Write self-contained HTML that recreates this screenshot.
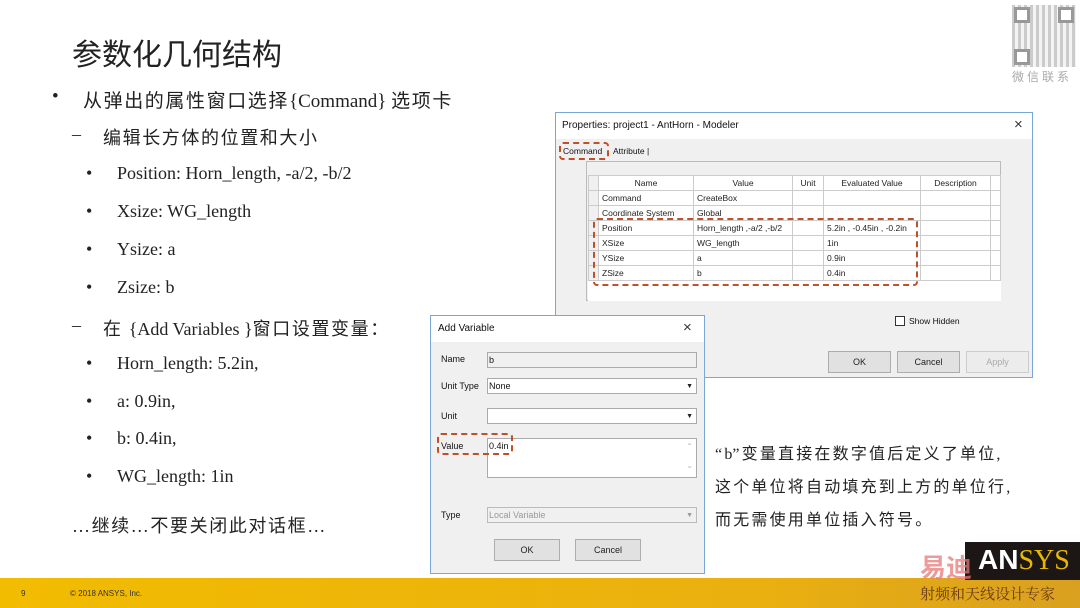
<!DOCTYPE html>
<html><head><meta charset="utf-8"><style>
*{margin:0;padding:0;box-sizing:border-box}
body{width:1080px;height:608px;overflow:hidden;background:#fff;position:relative;font-family:"Liberation Serif","Noto Sans CJK SC",sans-serif;color:#222}
.a{position:absolute;white-space:nowrap}
.cn{letter-spacing:1.6px}
.l{letter-spacing:0}
.ui{font-family:"Liberation Sans",sans-serif;font-size:9px;color:#111}
.dash{position:absolute;border:2px dashed #c0502a;border-radius:4px}
table{border-collapse:collapse}
td{border:1px solid #ccc;height:15px;padding:0 3px;font-family:"Liberation Sans",sans-serif;font-size:8.5px;background:#fff}
.box{position:absolute;background:#fff;border:1px solid #aaa}
.btn{position:absolute;border:1px solid #adadad;background:#e1e1e1;text-align:center;font-family:"Liberation Sans",sans-serif;font-size:9px;line-height:20px}
</style></head><body>
<div class="a" style="left:72px;top:30px;font-size:30px;font-family:'Liberation Sans','Noto Sans CJK SC',sans-serif;color:#222">参数化几何结构</div>
<div class="a" style="left:52px;top:86px;font-size:19px">•</div>
<div class="a cn" style="left:83px;top:86px;font-size:19px">从弹出的属性窗口选择<span class="l">{Command} </span>选项卡</div>
<div class="a" style="left:72px;top:124px;font-size:18px">–</div>
<div class="a cn" style="left:103px;top:124px;font-size:18px">编辑长方体的位置和大小</div>
<div class="a" style="left:86px;top:163px;font-size:18px">•</div><div class="a" style="left:117px;top:163px;font-size:18px">Position: Horn_length, -a/2, -b/2</div>
<div class="a" style="left:86px;top:201px;font-size:18px">•</div><div class="a" style="left:117px;top:201px;font-size:18px">Xsize: WG_length</div>
<div class="a" style="left:86px;top:239px;font-size:18px">•</div><div class="a" style="left:117px;top:239px;font-size:18px">Ysize: a</div>
<div class="a" style="left:86px;top:277px;font-size:18px">•</div><div class="a" style="left:117px;top:277px;font-size:18px">Zsize: b</div>
<div class="a" style="left:72px;top:315px;font-size:18px">–</div><div class="a cn" style="left:103px;top:315px;font-size:18px">在 <span class="l">{Add Variables }</span>窗口设置变量：</div>
<div class="a" style="left:86px;top:353px;font-size:18px">•</div><div class="a" style="left:117px;top:353px;font-size:18px">Horn_length: 5.2in,</div>
<div class="a" style="left:86px;top:391px;font-size:18px">•</div><div class="a" style="left:117px;top:391px;font-size:18px">a: 0.9in,</div>
<div class="a" style="left:86px;top:428px;font-size:18px">•</div><div class="a" style="left:117px;top:428px;font-size:18px">b: 0.4in,</div>
<div class="a" style="left:86px;top:466px;font-size:18px">•</div><div class="a" style="left:117px;top:466px;font-size:18px">WG_length: 1in</div>
<div class="a cn" style="left:72px;top:512px;font-size:18px">…继续…不要关闭此对话框…</div>

<div class="a" style="left:715px;top:440px;font-size:16px;letter-spacing:2.2px">“<span class="l">b</span>”变量直接在数字值后定义了单位,</div>
<div class="a" style="left:715px;top:473px;font-size:16px;letter-spacing:2.2px">这个单位将自动填充到上方的单位行,</div>
<div class="a" style="left:715px;top:506px;font-size:16px;letter-spacing:2.2px">而无需使用单位插入符号。</div>

<!-- Properties dialog -->
<div class="a" style="left:555px;top:112px;width:478px;height:266px;background:#f0f0f0;border:1px solid #7aa7d6">
 <div style="height:26px;background:#fff"></div>
 <div class="a ui" style="left:6px;top:7px;font-size:10px">Properties: project1 - AntHorn - Modeler</div>
 <div class="a" style="left:458px;top:3px;font-size:15px;font-family:'Liberation Sans';color:#333">×</div>
 <div class="a ui" style="left:7px;top:33px;font-size:8.5px">Command</div>
 <div class="a ui" style="left:57px;top:33px;font-size:8.5px">Attribute |</div>
 <div class="a" style="left:30px;top:48px;width:415px;height:140px;border:1px solid #bbb;background:#f0f0f0"></div>
 <div class="a" style="left:32px;top:62px;width:413px;height:126px;background:#fff"></div>
 <table class="a" style="left:32px;top:62px">
  <tr><td style="width:10px;background:#f0f0f0"></td><td style="width:95px;text-align:center">Name</td><td style="width:99px;text-align:center">Value</td><td style="width:31px;text-align:center">Unit</td><td style="width:97px;text-align:center">Evaluated Value</td><td style="width:70px;text-align:center">Description</td><td style="width:10px"></td></tr>
  <tr><td style="background:#f0f0f0"></td><td>Command</td><td>CreateBox</td><td></td><td></td><td></td><td></td></tr>
  <tr><td style="background:#f0f0f0"></td><td>Coordinate System</td><td>Global</td><td></td><td></td><td></td><td></td></tr>
  <tr><td style="background:#f0f0f0"></td><td>Position</td><td>Horn_length ,-a/2 ,-b/2</td><td></td><td>5.2in , -0.45in , -0.2in</td><td></td><td></td></tr>
  <tr><td style="background:#f0f0f0"></td><td>XSize</td><td>WG_length</td><td></td><td>1in</td><td></td><td></td></tr>
  <tr><td style="background:#f0f0f0"></td><td>YSize</td><td>a</td><td></td><td>0.9in</td><td></td><td></td></tr>
  <tr><td style="background:#f0f0f0"></td><td>ZSize</td><td>b</td><td></td><td>0.4in</td><td></td><td></td></tr>
 </table>
 <div class="a" style="left:339px;top:203px;width:10px;height:10px;border:1px solid #333;background:#fff"></div>
 <div class="a ui" style="left:353px;top:203px;font-size:8.5px">Show Hidden</div>
 <div class="btn" style="left:272px;top:238px;width:63px">OK</div>
 <div class="btn" style="left:341px;top:238px;width:63px">Cancel</div>
 <div class="btn" style="left:410px;top:238px;width:63px;color:#aaa;background:#ececec;border-color:#ccc">Apply</div>
</div>
<div class="dash" style="left:559px;top:142px;width:50px;height:18px"></div>
<div class="dash" style="left:593px;top:218px;width:325px;height:68px"></div>

<!-- Add Variable dialog -->
<div class="a" style="left:430px;top:315px;width:275px;height:259px;background:#f0f0f0;border:1px solid #7aa7d6">
 <div style="height:26px;background:#fff"></div>
 <div class="a ui" style="left:7px;top:7px;font-size:10px">Add Variable</div>
 <div class="a" style="left:252px;top:3px;font-size:15px;font-family:'Liberation Sans';color:#333">×</div>
 <div class="a ui" style="left:10px;top:38px">Name</div>
 <div class="a" style="left:56px;top:36px;width:210px;height:16px;border:1px solid #aaa;background:#f0f0f0"><span class="ui" style="position:absolute;left:1px;top:2px">b</span></div>
 <div class="a ui" style="left:10px;top:65px">Unit Type</div>
 <div class="box" style="left:56px;top:62px;width:210px;height:16px"><span class="ui" style="position:absolute;left:1px;top:2px">None</span><span style="position:absolute;right:3px;top:3px;font-size:7px">▼</span></div>
 <div class="a ui" style="left:10px;top:95px">Unit</div>
 <div class="box" style="left:56px;top:92px;width:210px;height:16px"><span style="position:absolute;right:3px;top:3px;font-size:7px">▼</span></div>
 <div class="a ui" style="left:10px;top:125px">Value</div>
 <div class="box" style="left:56px;top:122px;width:210px;height:40px"><span class="ui" style="position:absolute;left:1px;top:2px">0.4in</span><span style="position:absolute;right:3px;top:3px;font-size:8px;color:#bbb">⌃</span><span style="position:absolute;right:3px;top:22px;font-size:8px;color:#bbb">⌄</span></div>
 <div class="a ui" style="left:10px;top:194px">Type</div>
 <div class="a" style="left:56px;top:191px;width:210px;height:16px;border:1px solid #bbb;background:#f0f0f0"><span class="ui" style="position:absolute;left:1px;top:2px;color:#999">Local Variable</span><span style="position:absolute;right:3px;top:3px;font-size:7px;color:#999">▼</span></div>
 <div class="btn" style="left:63px;top:223px;width:66px">OK</div>
 <div class="btn" style="left:144px;top:223px;width:66px">Cancel</div>
</div>
<div class="dash" style="left:437px;top:433px;width:76px;height:22px"></div>

<!-- QR -->
<div class="a" style="left:1012px;top:5px;width:64px;height:62px;background:repeating-linear-gradient(90deg,#aaa 0 3px,#eee 3px 6px),#ccc;opacity:.6"></div>
<div class="a" style="left:1014px;top:7px;width:16px;height:16px;border:3px solid #999;background:#fff"></div>
<div class="a" style="left:1058px;top:7px;width:16px;height:16px;border:3px solid #999;background:#fff"></div>
<div class="a" style="left:1014px;top:49px;width:16px;height:16px;border:3px solid #999;background:#fff"></div>
<div class="a" style="left:1012px;top:68px;font-size:12px;color:#aaa;font-family:'Noto Sans CJK SC',sans-serif;letter-spacing:3px">微信联系</div>

<!-- footer -->
<div class="a" style="left:0;top:578px;width:1080px;height:30px;background:linear-gradient(90deg,#f2bc00,#eab010 70%,#d9a020)"></div>
<div class="a" style="left:21px;top:589px;font-size:8px;font-family:'Liberation Sans';color:#333">9</div>
<div class="a" style="left:70px;top:589px;font-size:8px;font-family:'Liberation Sans';color:#333">© 2018 ANSYS, Inc.</div>
<div class="a" style="left:965px;top:542px;width:115px;height:38px;background:#1c1614"></div>
<div class="a" style="left:978px;top:544px;font-size:28px;font-family:'Liberation Sans';font-weight:bold;color:#fff">AN<span style="color:#e6b800;font-family:'Liberation Serif';font-weight:normal">SYS</span></div>
<div class="a" style="left:920px;top:548px;font-size:26px;font-weight:bold;color:rgba(230,120,120,.75);font-family:'Noto Sans CJK SC',sans-serif">易迪</div>
<div class="a" style="left:920px;top:583px;font-size:15px;color:#6a3a10;font-family:'Noto Serif CJK SC',serif">射频和天线设计专家</div>
</body></html>
